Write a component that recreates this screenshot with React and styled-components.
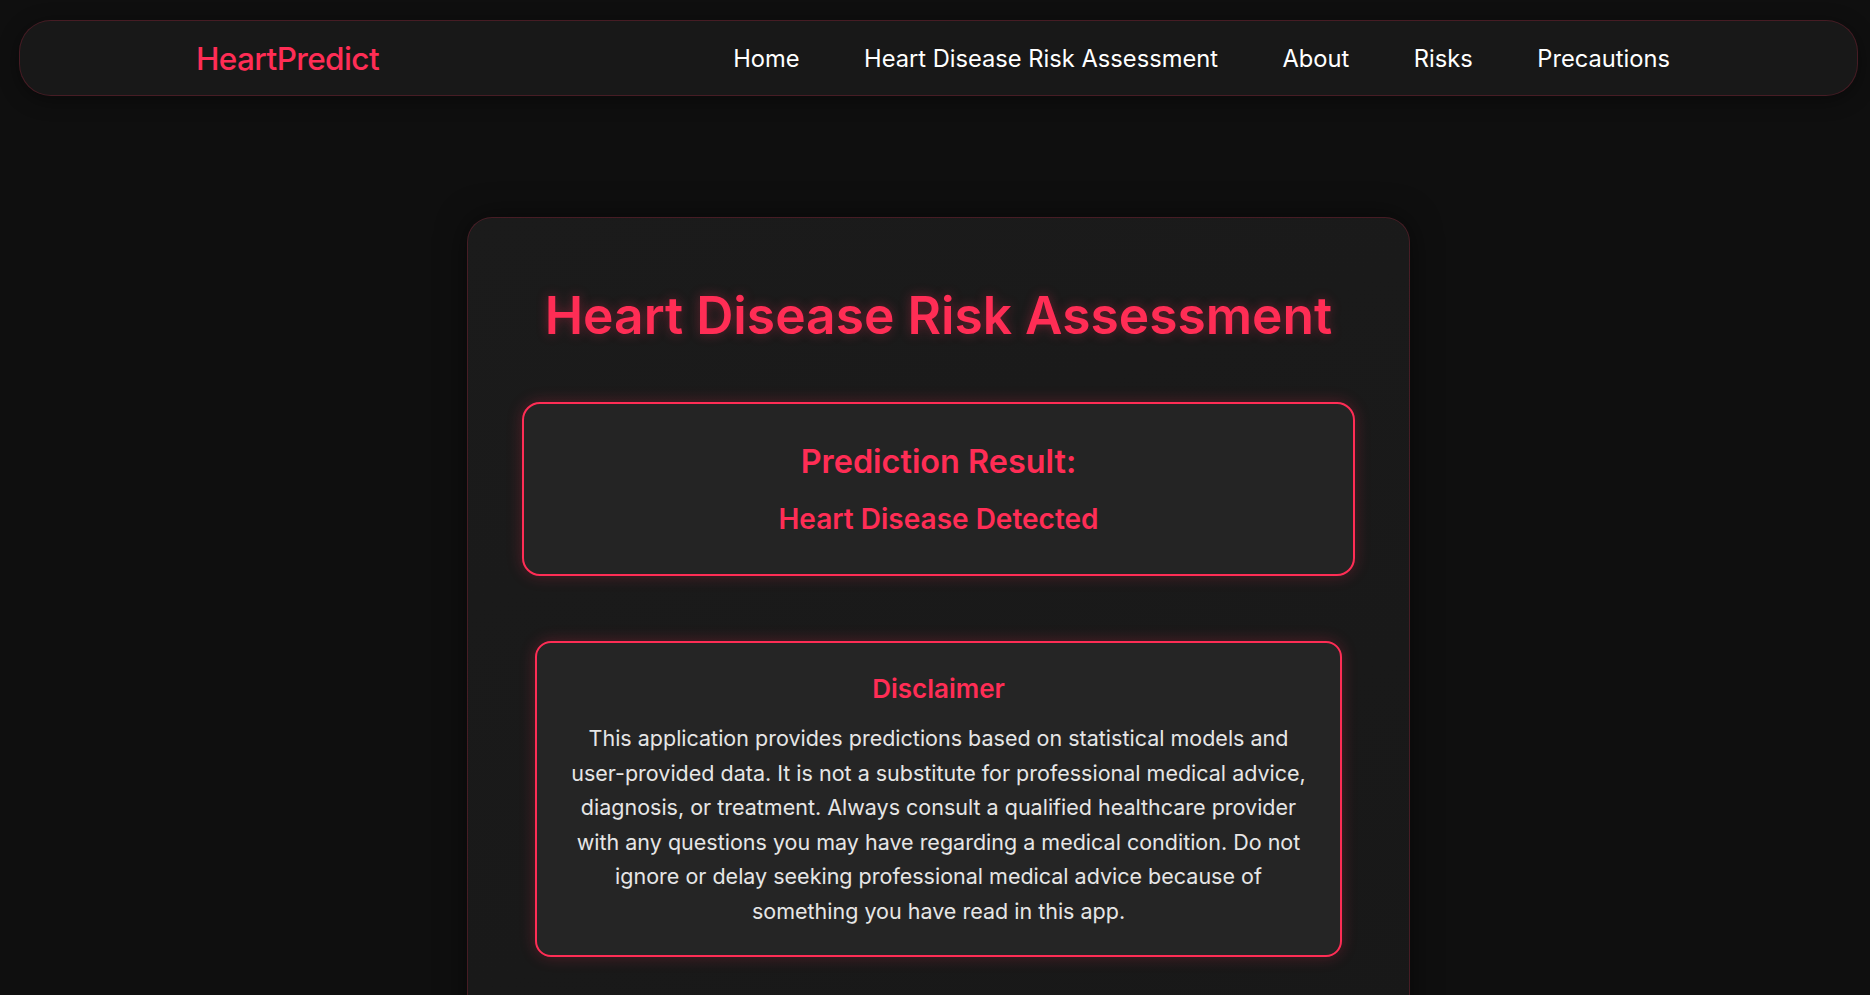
import React from 'react';
import styled, { createGlobalStyle } from 'styled-components';

const accent = '#ff2d55';

const GlobalStyle = createGlobalStyle`
  * {
    box-sizing: border-box;
  }

  body {
    margin: 0;
    background: #0f0f0f;
    color: #e6e6e6;
    font-family: Inter, 'Noto Sans', 'Liberation Sans', sans-serif;
  }
`;

const links = ['Home', 'Heart Disease Risk Assessment', 'About', 'Risks', 'Precautions'];

const App = () => (
  <>
    <GlobalStyle />
    <Page>
      <Navbar>
        <Logo>HeartPredict</Logo>
        <NavLinks>
          {links.map(link => (
            <NavLink key={link} href='#'>
              {link}
            </NavLink>
          ))}
        </NavLinks>
      </Navbar>

      <Card>
        <Title>Heart Disease Risk Assessment</Title>

        <ResultBox>
          <ResultHeading>Prediction Result:</ResultHeading>
          <ResultText>Heart Disease Detected</ResultText>
        </ResultBox>

        <Disclaimer>
          <DisclaimerTitle>Disclaimer</DisclaimerTitle>
          <DisclaimerText>
            This application provides predictions based on statistical models and
            user-provided data. It is not a substitute for professional medical advice,
            diagnosis, or treatment. Always consult a qualified healthcare provider with
            any questions you may have regarding a medical condition. Do not ignore or
            delay seeking professional medical advice because of something you have read
            in this app.
          </DisclaimerText>
        </Disclaimer>
      </Card>
    </Page>
  </>
);

const Page = styled('div')`
  min-height: 100vh;
  padding: 20px 12px 60px 19px;
`;

const Navbar = styled('nav')`
  display: flex;
  align-items: center;
  justify-content: space-between;
  height: 76px;
  padding: 0 187px 0 176px;
  background: #181818;
  border: 1px solid rgba(255, 45, 85, 0.2);
  border-radius: 32px;
  box-shadow: 0 4px 20px rgba(0, 0, 0, 0.4);
`;

const Logo = styled('div')`
  color: ${accent};
  font-size: 31.5px;
  font-weight: 500;
  letter-spacing: -0.6px;
`;

const NavLinks = styled('div')`
  display: flex;
  align-items: center;
  gap: 64.5px;
`;

const NavLink = styled('a')`
  color: #ffffff;
  font-size: 23.7px;
  font-weight: 400;
  text-decoration: none;
`;

const Card = styled('main')`
  width: 943px;
  margin: 121px auto 0;
  padding: 66px 54px 80px;
  background: linear-gradient(160deg, #1b1b1b, #181818);
  border: 1px solid rgba(255, 45, 85, 0.2);
  border-radius: 25px;
  box-shadow: 0 0 30px rgba(0, 0, 0, 0.5);
`;

const Title = styled('h1')`
  margin: 0 0 56px;
  color: ${accent};
  font-size: 51.5px;
  font-weight: 600;
  text-align: center;
  text-shadow: 0 0 12px rgba(255, 45, 85, 0.35);
`;

const ResultBox = styled('section')`
  display: flex;
  flex-direction: column;
  align-items: center;
  gap: 21px;
  padding: 38px 20px 38px;
  background: #242424;
  border: 2px solid ${accent};
  border-radius: 18px;
  box-shadow: 0 0 15px rgba(255, 45, 85, 0.25);
`;

const ResultHeading = styled('h2')`
  margin: 0;
  color: ${accent};
  font-size: 32.4px;
  font-weight: 600;
`;

const ResultText = styled('p')`
  margin: 0;
  color: ${accent};
  font-size: 28px;
  font-weight: 600;
`;

const Disclaimer = styled('section')`
  margin: 65px 13px 0;
  padding: 30px 28px 26px;
  background: #252525;
  border: 2px solid ${accent};
  border-radius: 16px;
  box-shadow: 0 0 15px rgba(255, 45, 85, 0.25);
  text-align: center;
`;

const DisclaimerTitle = styled('h3')`
  margin: 0 0 17px;
  color: ${accent};
  font-size: 26px;
  font-weight: 600;
`;

const DisclaimerText = styled('p')`
  margin: 0;
  color: #e6e6e6;
  font-size: 21.5px;
  line-height: 34.6px;
`;

export default App;
